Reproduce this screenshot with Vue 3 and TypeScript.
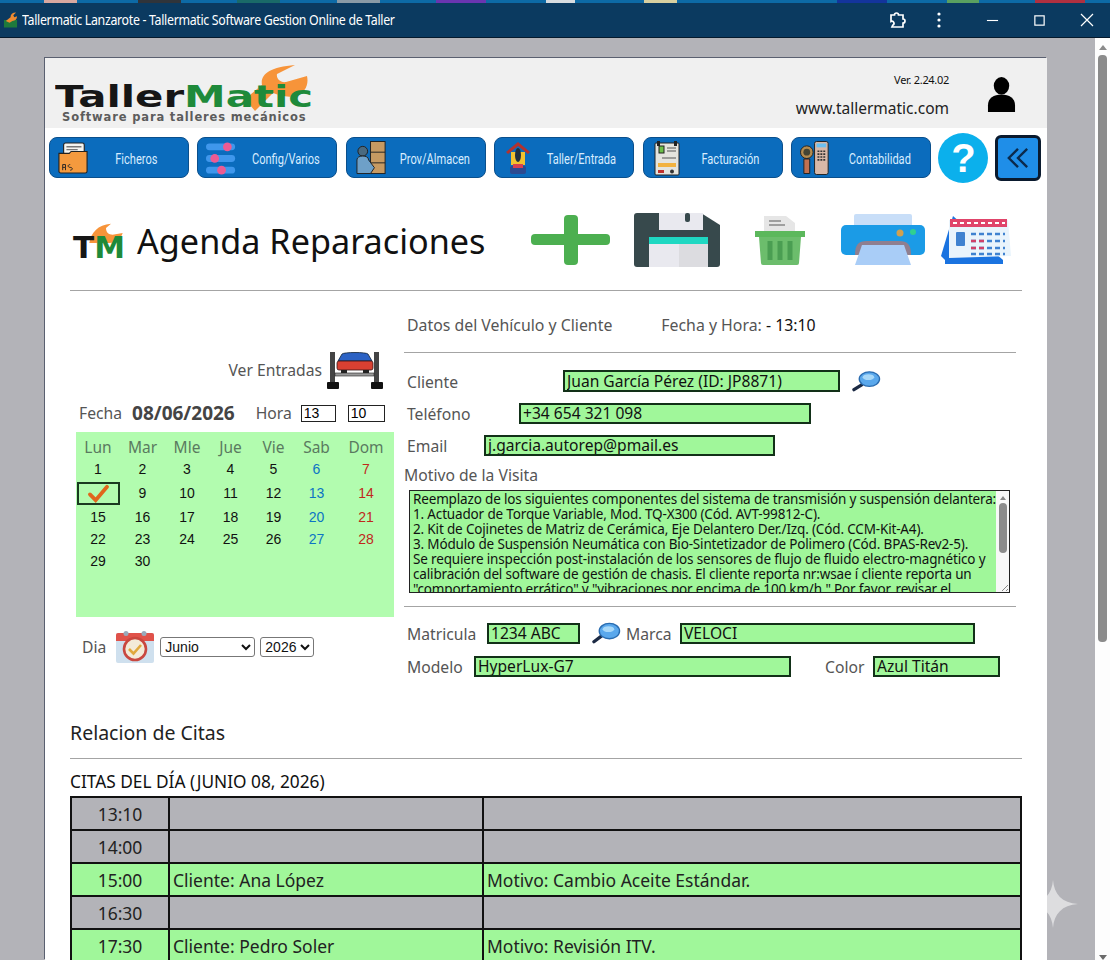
<script setup lang="ts">
const weekdays = ['Lun', 'Mar', 'Mle', 'Jue', 'Vie', 'Sab', 'Dom'];
const days = Array.from({ length: 30 }, (_, i) => i + 1);

const dayClass = (d: number) => {
  const col = (d - 1) % 7;
  if (col === 5) return 'sat';
  if (col === 6) return 'sun';
  return '';
};

// bits of the window behind, showing above the title bar
const stripColors = [
  ['#0d6aa6', 44], ['#d8a8a0', 33], ['#0d6aa6', 61], ['#30343a', 43], ['#0d6aa6', 56],
  ['#1a6a68', 43], ['#0d6aa6', 57], ['#8a9aa6', 43], ['#0d6aa6', 56], ['#6a35b0', 50],
  ['#0d6aa6', 60], ['#d8dce0', 29], ['#0d6aa6', 69], ['#d8cfa0', 33], ['#0d6aa6', 160],
  ['#14349c', 50], ['#0d6aa6', 60], ['#5aa060', 32], ['#0d6aa6', 56], ['#b03040', 50], ['#0d6aa6', 25],
] as const;

const citas = [
  { hora: '13:10', cliente: '', motivo: '' },
  { hora: '14:00', cliente: '', motivo: '' },
  { hora: '15:00', cliente: 'Cliente: Ana López', motivo: 'Motivo: Cambio Aceite Estándar.' },
  { hora: '16:30', cliente: '', motivo: '' },
  { hora: '17:30', cliente: 'Cliente: Pedro Soler', motivo: 'Motivo: Revisión ITV.' },
];

const motivo = `Reemplazo de los siguientes componentes del sistema de transmisión y suspensión delantera:
1. Actuador de Torque Variable, Mod. TQ-X300 (Cód. AVT-99812-C).
2. Kit de Cojinetes de Matriz de Cerámica, Eje Delantero Der./Izq. (Cód. CCM-Kit-A4).
3. Módulo de Suspensión Neumática con Bio-Sintetizador de Polimero (Cód. BPAS-Rev2-5).
Se requiere inspección post-instalación de los sensores de flujo de fluido electro-magnético y
calibración del software de gestión de chasis. El cliente reporta nr:wsae í cliente reporta un
"comportamiento errático" y "vibraciones por encima de 100 km/h." Por favor, revisar el`;
</script>

<template>
  <div class="window">
    <div class="strip">
      <span v-for="(s, i) in stripColors" :key="i" :style="{ background: s[0], width: s[1] + 'px' }"></span>
    </div>
    <header class="titlebar">
      <svg class="favicon" viewBox="0 0 16 18">
        <path d="M1 17V9h14v8z" fill="#1e7a3c" />
        <path d="M3 10l5-4c0-3 2-5 6-5l-3 3 1 2 3-1c0 3-2 5-5 5l-3 2z" fill="#f08a30" />
      </svg>
      <span class="window-title">Tallermatic Lanzarote - Tallermatic Software Gestion Online de Taller</span>
      <div class="window-tools">
        <svg class="tool ext" viewBox="0 0 20 20" fill="none" stroke="#fff" stroke-width="1.7">
          <path d="M4 5h3.5a2 2 0 0 1 4 0H16v4a2 2 0 0 1 0 4v4H5l.8-1.8A2 2 0 0 0 4 11.5z" />
        </svg>
        <svg class="tool kebab" viewBox="0 0 6 18" fill="#fff">
          <circle cx="3" cy="3" r="1.6" /><circle cx="3" cy="9" r="1.6" /><circle cx="3" cy="15" r="1.6" />
        </svg>
        <svg class="tool min" viewBox="0 0 14 14" stroke="#fff" stroke-width="1.2"><path d="M1 7h12" /></svg>
        <svg class="tool max" viewBox="0 0 14 14" fill="none" stroke="#fff" stroke-width="1.3"><rect x="2" y="2" width="10" height="10" /></svg>
        <svg class="tool close" viewBox="0 0 14 14" stroke="#fff" stroke-width="1.2"><path d="M1 1l12 12M13 1L1 13" /></svg>
      </div>
    </header>

    <div class="viewport">
      <div class="canvas">
        <main class="page">
          <section class="brand">
            <div class="logo">
              <svg class="logo-wrench" viewBox="0 0 64 46">
                <path d="M0 34 17 20C15 10 24 2 50 0L32 9c-1 4 3 9 9 8l21-6c2 9-2 17-12 20-8 2-16-1-22-3L10 46z" fill="#f7943a" />
              </svg>
              <div class="logo-name"><span class="logo-black">Taller</span><span class="logo-green">Matic</span></div>
              <div class="logo-sub">Software para talleres mecánicos</div>
            </div>
            <div class="brand-right">
              <div class="brand-text">
                <div class="version">Ver. 2.24.02</div>
                <div class="site">www.tallermatic.com</div>
              </div>
              <svg class="user" viewBox="0 0 30 36" fill="#000">
                <ellipse cx="15" cy="9" rx="8" ry="9" />
                <path d="M1 36v-7c0-7 6-11 14-11s14 4 14 11v7z" />
              </svg>
            </div>
          </section>

          <nav class="nav">
            <button class="nav-btn">
              <svg viewBox="0 0 32 36">
                <rect x="6" y="2" width="22" height="12" rx="2" fill="#f4f4f0" stroke="#222" stroke-width="1.200" />
                <path d="M9 6h16M9 9h12" stroke="#777" stroke-width="1.400" />
                <path d="M1 13h11l2-2h17v21a2 2 0 0 1-2 2H3a2 2 0 0 1-2-2z" fill="#f49a3e" stroke="#222" stroke-width="1.200" />
                <path d="M5 25v6M5 25h3v3H5M8 28v3M13 25c-3 0-3 3 0 3s3 3 0 3" fill="none" stroke="#222" />
              </svg>
              <span>Ficheros</span>
            </button>
            <button class="nav-btn">
              <svg class="wide" viewBox="0 0 34 36">
                <rect x="0" y="3" width="30" height="7" rx="3.500" fill="#3f97ec" />
                <rect x="0" y="15" width="30" height="7" rx="3.500" fill="#3f97ec" />
                <rect x="0" y="27" width="30" height="7" rx="3.500" fill="#3f97ec" />
                <circle cx="22" cy="6.500" r="4.500" fill="#ec5b93" />
                <circle cx="9" cy="18.500" r="4.500" fill="#ec5b93" />
                <circle cx="16" cy="30.500" r="4.500" fill="#ec5b93" />
              </svg>
              <span>Config/Varios</span>
            </button>
            <button class="nav-btn">
              <svg class="wide" viewBox="0 0 34 36">
                <rect x="16" y="1" width="15" height="33" fill="#c79a62" stroke="#222" />
                <path d="M16 12h15M16 23h15" stroke="#222" />
                <circle cx="8" cy="11" r="5" fill="#4a6a80" stroke="#222" />
                <path d="M2 34V20c0-3 3-4 6-4s6 1 6 4l6 8-4 6z" fill="#6ea0c8" stroke="#222" />
              </svg>
              <span>Prov/Almacen</span>
            </button>
            <button class="nav-btn">
              <svg viewBox="0 0 28 36">
                <path d="M2 12 14 2l12 10-2 2-10-8-10 8z" fill="#b3322f" />
                <path d="M7 12h14v13H7z" fill="#f2c230" />
                <ellipse cx="14" cy="15" rx="3" ry="7" fill="#203040" />
                <rect x="6" y="26" width="16" height="8" rx="2" fill="#2c4a90" />
                <rect x="9" y="24" width="10" height="4" fill="#d84050" />
              </svg>
              <span>Taller/Entrada</span>
            </button>
            <button class="nav-btn">
              <svg viewBox="0 0 26 36">
                <rect x="1" y="3" width="24" height="32" rx="1" fill="#e4e4de" stroke="#222" />
                <rect x="3" y="1" width="3" height="5" fill="#222" /><rect x="20" y="1" width="3" height="5" fill="#222" />
                <rect x="5" y="6" width="5" height="7" fill="#6cc04a" stroke="#222" />
                <path d="M13 8h9M13 11h9M8 18h14" stroke="#555" />
                <rect x="4" y="23" width="18" height="4" fill="#f2b23e" />
                <rect x="4" y="30" width="6" height="3" fill="#c0302c" /><circle cx="18" cy="31.500" r="2" fill="#333" />
              </svg>
              <span>Facturación</span>
            </button>
            <button class="nav-btn">
              <svg class="wide" viewBox="0 0 34 36">
                <rect x="15" y="1" width="14" height="34" rx="2" fill="#d8b8a8" stroke="#222" />
                <rect x="17" y="3" width="10" height="4" fill="#6cc0f0" />
                <path d="M18 11h8M18 14h8M18 17h8M18 20h8" stroke="#333" stroke-width="1.700" stroke-dasharray="2 1" />
                <circle cx="7" cy="12" r="6.500" fill="#b48c50" stroke="#222" />
                <circle cx="7" cy="12" r="3.500" fill="#443" />
                <path d="M4 19h6v15H4z" fill="#c07050" stroke="#222" />
              </svg>
              <span>Contabilidad</span>
            </button>
            <button class="help">?</button>
            <button class="back">
              <svg viewBox="0 0 24 24" fill="none" stroke="#0b2a4c" stroke-width="2.600">
                <path d="M12 2 2 12l10 10M22 2 12 12l10 10" />
              </svg>
            </button>
          </nav>

          <div class="content">
            <section class="heading">
              <div class="tm">
                <svg viewBox="0 0 40 24" class="tm-wrench">
                  <path d="M0 24C2 12 10 2 26 1l-6 5c0 5 3 8 8 8l12-2c-2 7-8 12-16 12z" fill="#f7943a" />
                </svg>
                <div class="tm-letters"><span class="logo-black">T</span><span class="logo-green">M</span></div>
              </div>
              <h1>Agenda Reparaciones</h1>
              <div class="actions">
                <svg class="a-plus" viewBox="0 0 80 52" fill="#4caf50">
                  <rect x="0" y="20" width="79" height="11" rx="4" />
                  <rect x="33" y="1" width="14" height="50" rx="4" />
                </svg>
                <svg class="a-save" viewBox="0 0 88 54">
                  <path d="M4 0h64l19 12v39a3 3 0 0 1-3 3H4a3 3 0 0 1-3-3V3a3 3 0 0 1 3-3z" fill="#37494c" />
                  <rect x="26" y="-1" width="44" height="18" fill="#e9e9ef" />
                  <rect x="52" y="0" width="5" height="9" rx="2" fill="#37494c" />
                  <rect x="16" y="24" width="59" height="7" fill="#1fd8c2" />
                  <rect x="16" y="31" width="59" height="23" fill="#e9e9ef" />
                  <rect x="46" y="31" width="29" height="23" fill="#dcdce0" />
                </svg>
                <svg class="a-trash" viewBox="0 0 50 50">
                  <path d="M9 18V1h22l9 7v10z" fill="#e6e6e6" />
                  <path d="M14 6h12M14 10h16" stroke="#888" stroke-width="1.500" />
                  <rect x="0" y="16" width="50" height="6" fill="#5cb85c" />
                  <path d="M4 22h42l-2 26a2 2 0 0 1-2 2H8a2 2 0 0 1-2-2z" fill="#6cbd6c" />
                  <path d="M15 26v19M25 26v19M35 26v19" stroke="#4a9e52" stroke-width="5" />
                </svg>
                <svg class="a-print" viewBox="0 0 84 52">
                  <rect x="13" y="0" width="58" height="14" rx="2" fill="#c8def8" />
                  <rect x="0" y="11" width="84" height="30" rx="5" fill="#1b9be6" />
                  <circle cx="59" cy="19" r="3.500" fill="#d0a050" />
                  <circle cx="72" cy="18" r="3" fill="#30d090" />
                  <path d="M14 41c0-10 3-14 12-14h32c9 0 12 4 12 14z" fill="#8f7f90" />
                  <path d="M21 31h42l7 20H14z" fill="#a9cdf7" />
                </svg>
                <svg class="a-cal" viewBox="0 0 70 48">
                  <path d="M12 0 0 40l4 4h58z" fill="#1a73e0" />
                  <path d="M8 42V4h59l3 36z" fill="#e9f4fc" />
                  <rect x="9" y="3" width="57" height="8" fill="#e0446a" />
                  <path d="M12 7h52" stroke="#fff" stroke-width="2" stroke-dasharray="4 3" />
                  <rect x="15" y="16" width="9" height="14" rx="1" fill="#3f82d0" />
                  <path d="M30 18h34M30 25h34M30 32h34M30 38h34" stroke-dasharray="5 3" stroke-width="2.500" stroke="#3f82d0" />
                  <path d="M30 25h14M30 32h14" stroke-dasharray="5 3" stroke-width="2.500" stroke="#d0406a" />
                  <path d="M4 44h58v4H4z" fill="#1a73e0" />
                </svg>
              </div>
            </section>
            <hr class="rule" />

            <div class="main">
              <aside class="left">
                <div class="ver-row">
                  <span class="lbl">Ver Entradas</span>
                  <svg class="lift" viewBox="0 0 56 38">
                    <rect x="3" y="1" width="5" height="30" fill="#444" />
                    <rect x="47" y="1" width="5" height="30" fill="#444" />
                    <rect x="0" y="31" width="12" height="7" rx="1" fill="#111" />
                    <rect x="44" y="31" width="12" height="7" rx="1" fill="#111" />
                    <rect x="8" y="22" width="39" height="3" fill="#999" stroke="#222" stroke-width=".6" />
                    <path d="M11 10l4-7c2-2 24-2 26 0l4 7z" fill="#2c62c4" stroke="#123" stroke-width=".8" />
                    <rect x="10" y="10" width="36" height="9" rx="2" fill="#d84032" stroke="#311" stroke-width=".8" />
                    <rect x="14" y="19" width="6" height="3" fill="#222" /><rect x="36" y="19" width="6" height="3" fill="#222" />
                  </svg>
                </div>

                <div class="fecha-row">
                  <span class="lbl">Fecha</span>
                  <strong class="date">08/06/2026</strong>
                  <span class="lbl hora">Hora</span>
                  <input class="time-in first" value="13" readonly />
                  <input class="time-in" value="10" readonly />
                </div>

                <div class="calendar">
                  <span v-for="w in weekdays" :key="w" class="wd">{{ w }}</span>
                  <template v-for="d in days" :key="d">
                    <span v-if="d === 8" class="day selected">
                      <svg viewBox="0 0 24 20" fill="none" stroke="#e0661c" stroke-width="4" stroke-linecap="round">
                        <path d="M3 11l6 6L21 3" />
                      </svg>
                    </span>
                    <span v-else class="day" :class="dayClass(d)">{{ d }}</span>
                  </template>
                </div>

                <div class="dia-row">
                  <span class="lbl">Dia</span>
                  <svg class="dia-icon" viewBox="0 0 38 32">
                    <rect x="0" y="2" width="38" height="30" rx="2" fill="#cfe0ee" />
                    <path d="M0 10V4a2 2 0 0 1 2-2h34a2 2 0 0 1 2 2v6z" fill="#e0524a" />
                    <circle cx="10" cy="2.500" r="2.500" fill="#9ab" /><circle cx="28" cy="2.500" r="2.500" fill="#9ab" />
                    <circle cx="19" cy="18" r="11" fill="#f3ead8" stroke="#c9473f" stroke-width="2.600" />
                    <path d="M13 18l4.500 4.500L25 14" fill="none" stroke="#e0a83c" stroke-width="2.600" />
                  </svg>
                  <select class="sel month"><option>Junio</option></select>
                  <select class="sel year"><option>2026</option></select>
                </div>
              </aside>

              <section class="right">
                <div class="right-head">
                  <span class="lbl">Datos del Vehículo y Cliente</span>
                  <span class="lbl fh">Fecha y Hora: <b>- 13:10</b></span>
                </div>
                <hr class="rule head-rule" />

                <div class="row r-cliente">
                  <label class="lbl">Cliente</label>
                  <input class="field" value="Juan García Pérez (ID: JP8871)" readonly />
                  <svg class="mag" viewBox="0 0 30 22">
                    <path d="M2 20l8-5" stroke="#1c2a44" stroke-width="3.400" stroke-linecap="round" />
                    <ellipse cx="18" cy="9" rx="10.500" ry="7.500" fill="#5aa8ec" stroke="#2a6cb0" stroke-width="1.400" />
                    <ellipse cx="17" cy="7" rx="6" ry="3" fill="#a8d8f8" />
                  </svg>
                </div>
                <div class="row r-tel">
                  <label class="lbl">Teléfono</label>
                  <input class="field" value="+34 654 321 098" readonly />
                </div>
                <div class="row r-email">
                  <label class="lbl">Email</label>
                  <input class="field" value="j.garcia.autorep@pmail.es" readonly />
                </div>
                <div class="lbl motivo-lbl">Motivo de la Visita</div>
                <div class="memo">
                  <div class="memo-text">{{ motivo }}</div>
                  <div class="memo-bar">
                    <i class="up"></i>
                    <i class="thumb"></i>
                    <svg class="grip" viewBox="0 0 10 10" stroke="#888"><path d="M9 3 3 9M9 7 7 9" /></svg>
                  </div>
                </div>
                <hr class="rule memo-rule" />

                <div class="row r-mat">
                  <label class="lbl">Matricula</label>
                  <input class="field plate" value="1234 ABC" readonly />
                  <svg class="mag" viewBox="0 0 30 22">
                    <path d="M2 20l8-6" stroke="#1c2a44" stroke-width="3.400" stroke-linecap="round" />
                    <ellipse cx="18" cy="9" rx="10.500" ry="8" fill="#5aa8ec" stroke="#2a6cb0" stroke-width="1.400" />
                    <ellipse cx="17" cy="7" rx="6" ry="3" fill="#a8d8f8" />
                  </svg>
                  <label class="lbl marca">Marca</label>
                  <input class="field brand-in" value="VELOCI" readonly />
                </div>
                <div class="row r-mod">
                  <label class="lbl">Modelo</label>
                  <input class="field model" value="HyperLux-G7" readonly />
                  <label class="lbl color">Color</label>
                  <input class="field color-in" value="Azul Titán" readonly />
                </div>
              </section>
            </div>

            <h2 class="rel-title">Relacion de Citas</h2>
            <hr class="rule rel-rule" />
            <h3 class="day-title">CITAS DEL DÍA (JUNIO 08, 2026)</h3>
            <table class="citas">
              <colgroup>
                <col class="c1" /><col class="c2" /><col />
              </colgroup>
              <tr v-for="c in citas" :key="c.hora" :class="c.cliente ? 'busy' : 'free'">
                <td class="hour">{{ c.hora }}</td>
                <td>{{ c.cliente }}</td>
                <td>{{ c.motivo }}</td>
              </tr>
            </table>
          </div>
        </main>
      </div>
      <div class="scrollbar">
        <i class="sb-up"></i>
        <i class="sb-thumb"></i>
        <i class="sb-down"></i>
      </div>
    </div>

    <svg class="sparkle" viewBox="0 0 50 48">
      <path d="M25 0C26 14 34 23 50 24 34 25 26 34 25 48 24 34 16 25 0 24 16 23 24 14 25 0z" fill="rgba(255,255,255,.55)" />
    </svg>
  </div>
</template>

<style scoped>
.window {
  position: relative;
  width: 1110px;
  height: 960px;
  overflow: hidden;
  display: flex;
  flex-direction: column;
  font-family: "Noto Sans", "Open Sans", sans-serif;
  color: #111;
}
.strip {
  display: flex;
  height: 3px;
  flex: none;
}
.strip span {
  flex: none;
}
.titlebar {
  flex: none;
  box-sizing: border-box;
  height: 35px;
  background: #0b3a60;
  border-bottom: 1px solid #05192c;
  display: flex;
  align-items: center;
  padding-left: 3px;
  color: #fff;
}
.favicon {
  flex: none;
  width: 15px;
  height: 18px;
}
.window-title {
  margin-left: 4px;
  font-size: 13.500px;
  letter-spacing: -0.35px;
  white-space: nowrap;
  transform-origin: left;
  transform: scaleX(0.917);
}
.window-tools {
  margin-left: auto;
  display: flex;
  align-items: center;
}
.tool {
  flex: none;
}
.ext {
  width: 20px;
  height: 20px;
}
.kebab {
  width: 6px;
  height: 18px;
  margin-left: 29px;
}
.min {
  width: 13px;
  height: 13px;
  margin-left: 44px;
}
.max {
  width: 13px;
  height: 13px;
  margin-left: 34px;
}
.close {
  width: 14px;
  height: 14px;
  margin-left: 34px;
  margin-right: 16px;
}

.viewport {
  flex: 1;
  min-height: 0;
  display: flex;
}
.canvas {
  flex: 1;
  background: #b3b3b8;
  padding: 20px 48px 0 45px;
  overflow: hidden;
}
.page {
  background: #fff;
  height: 100%;
  box-shadow: -1px -1px 0 #5a6070;
}
.scrollbar {
  width: 15px;
  background: #fdfdfd;
  display: flex;
  flex-direction: column;
  align-items: center;
  position: relative;
}
.sb-up {
  margin-top: 7px;
  border: 4px solid transparent;
  border-top: 0;
  border-bottom: 5px solid #8a8a8a;
}
.sb-thumb {
  margin-top: 5px;
  width: 9px;
  height: 587px;
  border-radius: 4px;
  background: #8b8b8b;
}
.sb-down {
  margin-top: auto;
  margin-bottom: 0;
  border: 4px solid transparent;
  border-bottom: 0;
  border-top: 5px solid #6a6a6a;
}

.brand {
  height: 70px;
  background: #f0f0f0;
  display: flex;
  justify-content: space-between;
  position: relative;
}
.logo {
  position: relative;
  padding: 24px 0 0 10px;
}
.logo-wrench {
  position: absolute;
  left: 200px;
  top: 7px;
  width: 64px;
  height: 46px;
}
.logo-name {
  position: relative;
  font-family: "DejaVu Sans", sans-serif;
  font-weight: 700;
  font-size: 31px;
  line-height: 29px;
  white-space: nowrap;
  transform-origin: left;
  transform: scaleX(1.35);
}
.logo-black {
  color: #161616;
}
.logo-green {
  color: #1e8a3a;
}
.logo-sub {
  font-family: "DejaVu Sans", sans-serif;
  font-weight: 700;
  font-size: 11.500px;
  line-height: 12px;
  margin: 0 0 0 7px;
  letter-spacing: 0.85px;
  white-space: nowrap;
  color: #5c5c5c;
}
.brand-right {
  display: flex;
  align-items: flex-start;
  padding-right: 31px;
}
.brand-text {
  text-align: right;
  padding-top: 14px;
}
.version {
  font-size: 11px;
  line-height: 16px;
  letter-spacing: -0.3px;
}
.site {
  font-size: 15.500px;
  line-height: 22px;
  margin-top: 9px;
  color: #222;
}
.user {
  width: 29px;
  height: 35px;
  margin: 19px 0 0 38px;
}

.nav {
  height: 41px;
  margin-top: 9px;
  padding-left: 4px;
  display: flex;
  align-items: center;
  gap: 8.400px;
}
.nav-btn {
  flex: none;
  width: 140px;
  height: 41px;
  padding: 0 0 0 8px;
  display: flex;
  align-items: center;
  background: #0b6cbd;
  border: 1px solid #0a4f8c;
  border-radius: 8px;
  color: #d8ecff;
  font-family: "Roboto", sans-serif;
  font-size: 13.500px;
}
.nav-btn svg {
  flex: none;
  width: 30px;
  height: 36px;
}
.nav-btn svg.wide {
  width: 33px;
}
.nav-btn span {
  flex: 1;
  text-align: center;
  padding-right: 4px;
  white-space: nowrap;
  transform: scale(0.82, 1.15);
}
.help {
  flex: none;
  width: 50px;
  height: 50px;
  margin-left: -1px;
  padding: 0;
  border: 0;
  border-radius: 50%;
  background: #0bb0ec;
  color: #fff;
  font-family: "Liberation Sans", sans-serif;
  font-weight: 700;
  font-size: 40px;
  line-height: 50px;
}
.back {
  flex: none;
  width: 46px;
  height: 46px;
  margin-left: -2px;
  padding: 9px;
  background: #1f8ee8;
  border: 3px solid #0a1a2e;
  border-radius: 6px;
}
.back svg {
  display: block;
  width: 22px;
  height: 22px;
}

.content {
  padding: 0 25px;
}
.heading {
  margin-top: 27px;
  height: 65px;
  display: flex;
  align-items: center;
}
.tm {
  position: relative;
  width: 52px;
  height: 36px;
  margin: 6px 0 0 3px;
}
.tm-wrench {
  position: absolute;
  left: 14px;
  top: 0;
  width: 38px;
  height: 20px;
}
.tm-letters {
  position: absolute;
  left: 0;
  bottom: -3px;
  font-family: "DejaVu Sans", sans-serif;
  font-weight: 700;
  font-size: 31px;
  line-height: 30px;
  white-space: nowrap;
}
h1 {
  margin: 6px 0 0 12px;
  font-size: 34.200px;
  font-weight: 400;
  line-height: 46px;
  color: #111;
  white-space: nowrap;
}
.actions {
  margin-left: auto;
  margin-right: 11px;
  margin-top: 4px;
  display: flex;
  align-items: center;
}
.a-plus {
  width: 80px;
  height: 52px;
}
.a-save {
  width: 88px;
  height: 54px;
  margin-left: 22px;
}
.a-trash {
  width: 50px;
  height: 50px;
  margin-left: 34px;
}
.a-print {
  width: 84px;
  height: 52px;
  margin-left: 36px;
}
.a-cal {
  width: 70px;
  height: 48px;
  margin-left: 16px;
}
.rule {
  margin: 0;
  border: 0;
  border-top: 1px solid #a4a4a4;
}
.heading + .rule {
  margin-top: 20px;
}

.main {
  display: flex;
}
.left {
  flex: none;
  width: 334px;
}
.right {
  flex: none;
  width: 612px;
}
.lbl {
  font-size: 15.700px;
  line-height: 20px;
  color: #555;
  white-space: nowrap;
}
.ver-row {
  margin-top: 60px;
  height: 38px;
  padding-right: 21px;
  display: flex;
  justify-content: flex-end;
  align-items: center;
  gap: 5px;
}
.lift {
  width: 56px;
  height: 38px;
}
.fecha-row {
  margin-top: 15px;
  height: 18px;
  padding-left: 9px;
  display: flex;
  align-items: center;
}
.date {
  margin-left: 10px;
  font-size: 19px;
  color: #444;
}
.hora {
  margin-left: 21px;
}
.time-in {
  box-sizing: border-box;
  width: 37px;
  height: 17px;
  margin-left: 12px;
  padding: 0 2px;
  border: 1px solid #222;
  font-family: "Liberation Sans", sans-serif;
  font-size: 14px;
}
.time-in.first {
  margin-left: 9px;
  width: 35px;
}
.calendar {
  margin: 10px 0 0 6px;
  box-sizing: border-box;
  width: 318px;
  height: 185px;
  background: #b2fcaf;
  display: grid;
  grid-template-columns: 44px 45px 44px 43px 43px 43px 56px;
  grid-template-rows: 22px 22px 26px 22px 22px 22px;
  align-content: start;
  padding-top: 4px;
}
.wd {
  text-align: center;
  font-size: 15.500px;
  line-height: 22px;
  color: #5a7a60;
}
.day {
  align-self: center;
  text-align: center;
  font-family: "Liberation Sans", sans-serif;
  font-size: 14px;
  line-height: 22px;
  color: #111;
}
.sat {
  color: #0c74c4;
}
.sun {
  color: #c0281c;
}
.selected {
  box-sizing: border-box;
  margin: 0 0 0 1px;
  border: 2px solid #1a3a20;
  height: 23px;
  display: flex;
  align-items: center;
  justify-content: center;
}
.selected svg {
  width: 23px;
  height: 19px;
}
.dia-row {
  margin-top: 14px;
  padding-left: 12px;
  height: 32px;
  display: flex;
  align-items: center;
}
.dia-icon {
  width: 38px;
  height: 32px;
  margin-left: 10px;
}
.sel {
  box-sizing: border-box;
  height: 20px;
  margin-left: 6px;
  background: #fff;
  border: 1px solid #777;
  border-radius: 3px;
  font-family: "Liberation Sans", sans-serif;
  font-size: 14px;
  color: #111;
}
.month {
  width: 95px;
}
.year {
  width: 54px;
  margin-left: 5px;
}

.right-head {
  margin-top: 23px;
  height: 22px;
  padding-left: 3px;
  display: flex;
  align-items: center;
}
.right-head .lbl {
  font-size: 15.850px;
}
.fh {
  margin-left: 49px;
}
.fh b {
  font-weight: 400;
  color: #111;
}
.head-rule {
  margin-top: 16px;
}
.row {
  display: flex;
  align-items: center;
  padding-left: 3px;
}
.row .lbl {
  flex: none;
  padding-top: 2px;
}
.field {
  box-sizing: border-box;
  height: 21px;
  padding: 0 2px;
  border: 2px solid #123018;
  background: #a0f79a;
  font-family: inherit;
  font-size: 15.600px;
  color: #111;
  outline: none;
}
.r-cliente {
  margin-top: 17px;
}
.r-cliente .lbl {
  width: 156px;
}
.r-cliente .field {
  width: 277px;
  height: 22px;
}
.mag {
  flex: none;
  width: 29px;
  height: 22px;
  margin-left: 12px;
}
.r-tel {
  margin-top: 10px;
}
.r-tel .lbl {
  width: 112px;
}
.r-tel .field {
  width: 292px;
}
.r-email {
  margin-top: 10px;
}
.r-email .lbl {
  width: 77px;
}
.r-email .field {
  width: 291px;
}
.motivo-lbl {
  margin-top: 9px;
}
.memo {
  margin: 5px 0 0 5px;
  box-sizing: border-box;
  width: 601px;
  height: 103px;
  display: flex;
  background: #a0f79a;
  border: 1px solid #222;
  overflow: hidden;
}
.memo-text {
  flex: 1;
  padding: 1px 0 0 3px;
  white-space: pre;
  overflow: hidden;
  font-size: 13.500px;
  line-height: 15px;
  letter-spacing: -0.16px;
  color: #111;
}
.memo-bar {
  flex: none;
  width: 13px;
  background: #f8f8f8;
  display: flex;
  flex-direction: column;
  align-items: center;
}
.up {
  margin-top: 5px;
  border: 3px solid transparent;
  border-top: 0;
  border-bottom: 4px solid #888;
}
.thumb {
  margin-top: 3px;
  width: 8px;
  height: 50px;
  border-radius: 4px;
  background: #8b8b8b;
}
.grip {
  width: 10px;
  height: 10px;
  margin-top: auto;
  margin-left: 2px;
}
.memo-rule {
  margin-top: 13px;
}
.r-mat {
  margin-top: 15px;
}
.r-mat > .lbl:first-child {
  width: 80px;
}
.plate {
  width: 93px;
}
.row .marca {
  width: 54px;
  margin-left: 5px;
}
.brand-in {
  width: 295px;
}
.r-mod {
  margin-top: 11px;
}
.r-mod > .lbl:first-child {
  width: 67px;
}
.model {
  width: 317px;
}
.color {
  width: 48px;
  margin-left: 34px;
}
.color-in {
  width: 127px;
}

.rel-title {
  margin: 42px 0 0;
  font-size: 19.500px;
  line-height: 28px;
  font-weight: 400;
  color: #222;
}
.rel-rule {
  margin-top: 11px;
}
.day-title {
  margin: 12px 0 0;
  font-size: 17.300px;
  line-height: 22px;
  font-weight: 400;
  color: #111;
}
.citas {
  margin-top: 3px;
  width: 952px;
  table-layout: fixed;
  border-collapse: collapse;
  border: 2px solid #111;
}
.c1 {
  width: 98px;
}
.c2 {
  width: 314px;
}
.citas td {
  height: 33px;
  box-sizing: border-box;
  padding: 0 3px;
  border: 2px solid #111;
  font-size: 17.500px;
  color: #222;
}
.citas .hour {
  text-align: center;
}
.free td {
  background: #b3b3b8;
}
.busy td {
  background: #a0f79a;
}
.sparkle {
  position: absolute;
  left: 1028px;
  top: 880px;
  width: 50px;
  height: 48px;
}
</style>
